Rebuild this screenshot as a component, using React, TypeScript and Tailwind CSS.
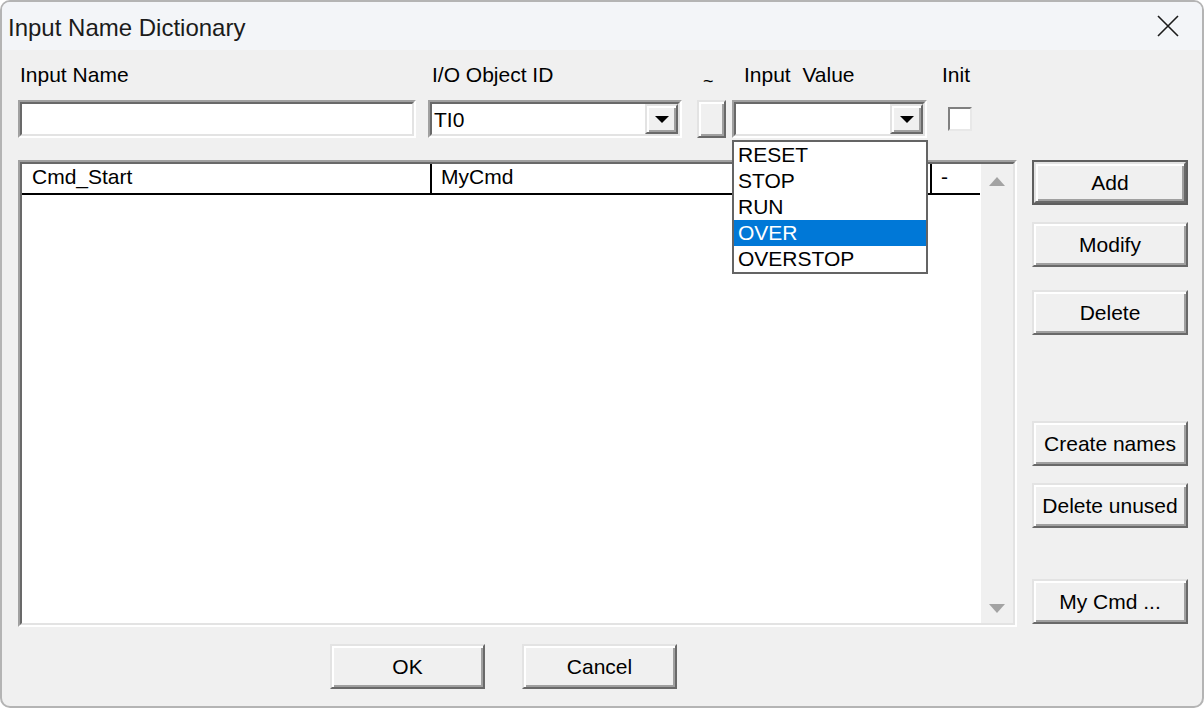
import React from "react";

const raised =
  "bg-[#f0f0f0] border-2 border-t-[#e3e3e3] border-l-[#e3e3e3] border-b-[#696969] border-r-[#696969] shadow-[inset_2px_2px_0_#ffffff,inset_-2px_-2px_0_#a0a0a0]";
const sunkenOuter =
  "border-2 border-t-[#a0a0a0] border-l-[#a0a0a0] border-b-white border-r-white";
const sunkenInner =
  "border-2 border-t-[#696969] border-l-[#696969] border-b-[#e3e3e3] border-r-[#e3e3e3]";

const items = ["RESET", "STOP", "RUN", "OVER", "OVERSTOP"];

const Btn = ({ label, className = "" }: { label: string; className?: string }) => (
  <div className={`${raised} h-[45px] w-full flex items-center justify-center leading-none ${className}`}>
    {label}
  </div>
);

const DefaultBtn = ({ label }: { label: string }) => (
  <div className="h-[45px] w-full border-2 border-[#5f5f5f]">
    <div className={`${raised} h-full w-full flex items-center justify-center leading-none`}>{label}</div>
  </div>
);

const Arrow = () => (
  <div className="w-0 h-0 border-l-[7px] border-r-[7px] border-t-[7px] border-l-transparent border-r-transparent border-t-black" />
);

const Combo = ({ value }: { value: string }) => (
  <div className={`${sunkenOuter} h-[38px]`}>
    <div className={`${sunkenInner} h-full bg-white flex items-center justify-between`}>
      <span className="pl-[2px] leading-none">{value}</span>
      <div className={`${raised} w-[33px] h-full flex items-center justify-center`}>
        <Arrow />
      </div>
    </div>
  </div>
);

export default function App() {
  return (
    <div className="w-[1204px] h-[708px] bg-white font-['Liberation_Sans',Arial,sans-serif] text-black">
      <div className="relative w-full h-full rounded-[10px] border-2 border-[#b4b4b4] bg-[#f0f0f0] overflow-hidden flex flex-col">
        {/* title bar */}
        <div className="h-[48px] shrink-0 bg-[#f3f5f8] flex items-center justify-between pl-[6px] pr-[23px]">
          <span className="text-[24px] leading-none pt-[4px] text-[#1b1b1b]">Input Name Dictionary</span>
          <svg width="22" height="22" viewBox="0 0 22 22">
            <path d="M1 1L21 21M21 1L1 21" stroke="#1b1b1b" strokeWidth="1.6" fill="none" />
          </svg>
        </div>

        <div className="flex-1 pl-[16px] text-[21px]">
          {/* field row */}
          <div className="flex pt-[13px]">
            <div className="w-[398px] flex flex-col">
              <span className="pl-[2px] h-6 leading-6">Input Name</span>
              <div className={`${sunkenOuter} mt-[13px] h-[38px]`}>
                <div className={`${sunkenInner} h-full bg-white`} />
              </div>
            </div>
            <div className="ml-[12px] w-[254px] flex flex-col">
              <span className="pl-[4px] h-6 leading-6">I/O Object ID</span>
              <div className="mt-[13px]">
                <Combo value="TI0" />
              </div>
            </div>
            <div className="ml-[15px] w-[29px] flex flex-col">
              <span className="pl-[6px] h-6 leading-6 pt-[6px] text-[18px]">~</span>
              <div className={`${raised} mt-[13px] h-[38px]`} />
            </div>
            <div className="ml-[6px] w-[195px] flex flex-col">
              <span className="pl-[12px] h-6 leading-6 whitespace-pre">Input  Value</span>
              <div className="mt-[13px]">
                <Combo value="" />
              </div>
            </div>
            <div className="ml-[15px] flex flex-col">
              <span className="h-6 leading-6">Init</span>
              <div className="mt-[13px] h-[38px] flex items-center pl-[6px]">
                <div className="w-[24px] h-[24px] bg-white border-2 border-t-[#808080] border-l-[#808080] border-b-[#e8e8e8] border-r-[#e8e8e8]" />
              </div>
            </div>
          </div>

          {/* list + side buttons */}
          <div className="mt-[22px] flex">
            <div className={`${sunkenOuter} w-[999px] h-[467px]`}>
              <div className={`${sunkenInner} h-full flex`}>
                <div className="w-[959px] h-full bg-white">
                  <div className="flex h-[31px] w-[958px] border-b-2 border-black leading-[26px]">
                    <div className="w-[410px] pl-[10px] border-r-2 border-black">Cmd_Start</div>
                    <div className="w-[500px] pl-[9px] border-r-2 border-black">MyCmd</div>
                    <div className="flex-1 pl-[9px]">-</div>
                  </div>
                </div>
                <div className="flex-1 h-full bg-[#f0f0f0] flex flex-col items-center justify-between pt-[13px] pb-[10px]">
                  <div className="w-0 h-0 border-l-[8px] border-r-[8px] border-b-[9px] border-l-transparent border-r-transparent border-b-[#a3a3a3]" />
                  <div className="w-0 h-0 border-l-[8px] border-r-[8px] border-t-[9px] border-l-transparent border-r-transparent border-t-[#a3a3a3]" />
                </div>
              </div>
            </div>
            <div className="ml-[15px] w-[156px] flex flex-col">
              <DefaultBtn label="Add" />
              <Btn label="Modify" className="mt-[17px]" />
              <Btn label="Delete" className="mt-[23px]" />
              <Btn label="Create names" className="mt-[86px]" />
              <Btn label="Delete unused" className="mt-[17px]" />
              <Btn label="My Cmd ..." className="mt-[51px]" />
            </div>
          </div>

          {/* dialog buttons */}
          <div className="mt-[17px] flex pl-[312px]">
            <div className="w-[155px]">
              <Btn label="OK" />
            </div>
            <div className="ml-[37px] w-[155px]">
              <Btn label="Cancel" />
            </div>
          </div>
        </div>

        {/* open combo list */}
        <div className="absolute left-[730px] top-[138px] w-[196px] h-[134px] bg-white border-2 border-[#646464] text-[21px]">
          {items.map((item) => (
            <div
              key={item}
              className={
                item === "OVER"
                  ? "h-[26px] leading-[26px] pl-[4px] bg-[#0078d7] text-white"
                  : "h-[26px] leading-[26px] pl-[4px]"
              }
            >
              {item}
            </div>
          ))}
        </div>
      </div>
    </div>
  );
}
